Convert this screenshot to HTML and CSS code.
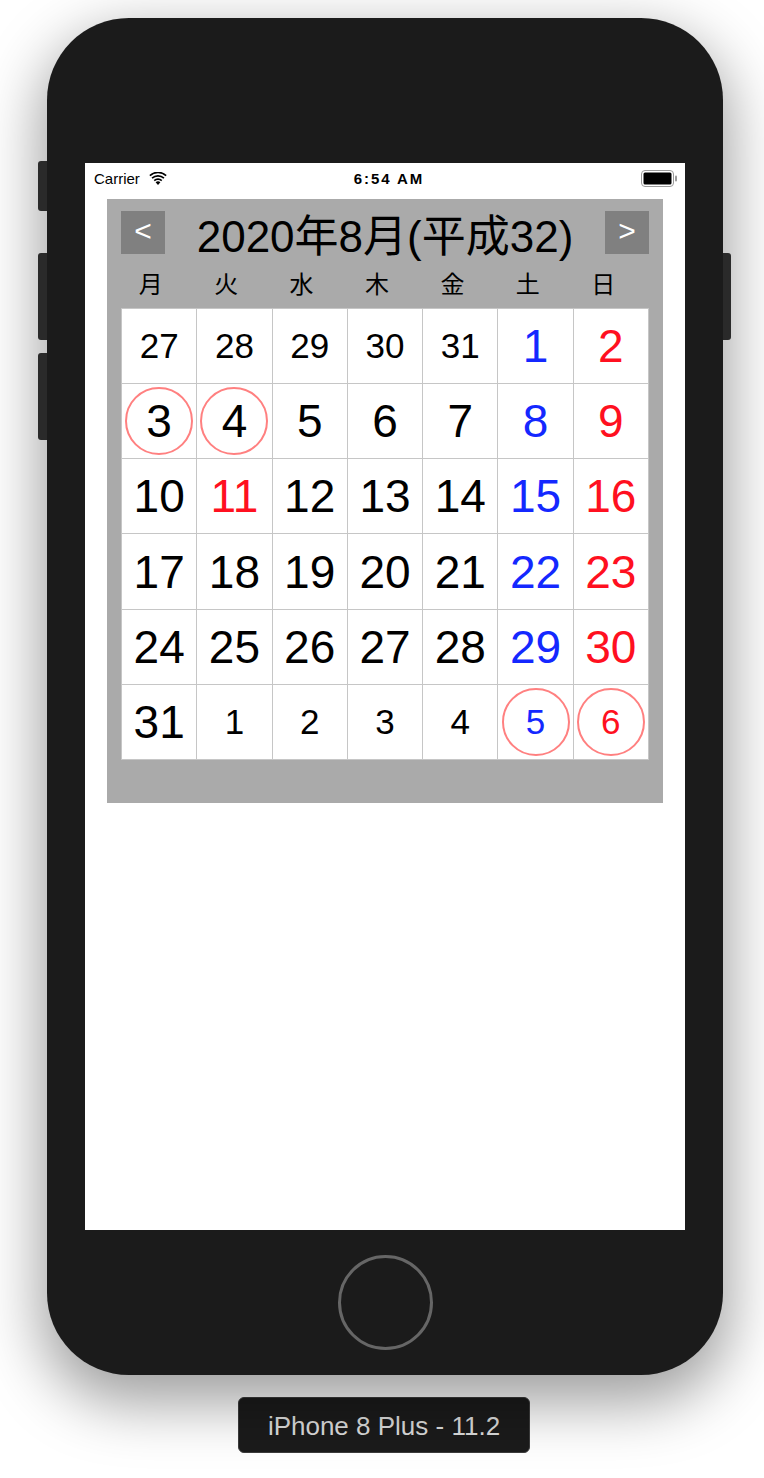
FILE: index.html
```html
<!DOCTYPE html>
<html lang="ja">
<head>
  <meta charset="UTF-8">
  <meta name="viewport" content="width=device-width, initial-scale=1.0">
  <title>カレンダー - iPhone 8 Plus</title>
  <link rel="stylesheet" href="styles.css">
</head>
<body>
  <div class="stage">
    <div class="phone">
      <span class="side-btn mute"></span>
      <span class="side-btn vol-up"></span>
      <span class="side-btn vol-down"></span>
      <span class="side-btn power"></span>

      <div class="screen">
        <div class="status-bar">
          <div class="carrier">
            Carrier
            <svg class="wifi" width="18" height="13" viewBox="0 0 18 13">
              <path d="M9 13 L6.6 10.2 A3.6 3.6 0 0 1 11.4 10.2 Z" fill="#000"/>
              <path d="M4.7 8 A6.4 6.4 0 0 1 13.3 8 L12.2 9.3 A4.6 4.6 0 0 0 5.8 9.3 Z" fill="#000"/>
              <path d="M2.5 5.5 A9.6 9.6 0 0 1 15.5 5.5 L14.4 6.8 A7.8 7.8 0 0 0 3.6 6.8 Z" fill="#000"/>
              <path d="M0.3 3 A12.8 12.8 0 0 1 17.7 3 L16.6 4.3 A11 11 0 0 0 1.4 4.3 Z" fill="#000"/>
            </svg>
          </div>
          <div class="clock">6:54 AM</div>
          <div class="battery">
            <svg width="37" height="17" viewBox="0 0 37 17">
              <rect x="0.5" y="0.5" width="32" height="16" rx="3.5" fill="none" stroke="#9a9a9a"/>
              <rect x="2.5" y="2.5" width="28" height="12" rx="1.5" fill="#000"/>
              <rect x="34" y="5.5" width="2" height="6" rx="1" fill="#9a9a9a"/>
            </svg>
          </div>
        </div>

        <div class="calendar">
          <div class="cal-head">
            <button class="nav">&lt;</button>
            <div class="cal-title">2020年8月(平成32)</div>
            <button class="nav">&gt;</button>
          </div>

          <div class="weekdays">
            <span>月</span><span>火</span><span>水</span><span>木</span><span>金</span><span>土</span><span>日</span>
          </div>

          <div class="days">
            <div class="day other">27</div>
            <div class="day other">28</div>
            <div class="day other">29</div>
            <div class="day other">30</div>
            <div class="day other">31</div>
            <div class="day sat">1</div>
            <div class="day sun">2</div>

            <div class="day mark">3</div>
            <div class="day mark">4</div>
            <div class="day">5</div>
            <div class="day">6</div>
            <div class="day">7</div>
            <div class="day sat">8</div>
            <div class="day sun">9</div>

            <div class="day">10</div>
            <div class="day sun">11</div>
            <div class="day">12</div>
            <div class="day">13</div>
            <div class="day">14</div>
            <div class="day sat">15</div>
            <div class="day sun">16</div>

            <div class="day">17</div>
            <div class="day">18</div>
            <div class="day">19</div>
            <div class="day">20</div>
            <div class="day">21</div>
            <div class="day sat">22</div>
            <div class="day sun">23</div>

            <div class="day">24</div>
            <div class="day">25</div>
            <div class="day">26</div>
            <div class="day">27</div>
            <div class="day">28</div>
            <div class="day sat">29</div>
            <div class="day sun">30</div>

            <div class="day">31</div>
            <div class="day other">1</div>
            <div class="day other">2</div>
            <div class="day other">3</div>
            <div class="day other">4</div>
            <div class="day other sat mark">5</div>
            <div class="day other sun mark">6</div>
          </div>
        </div>
      </div>

      <div class="home-btn"></div>
    </div>

    <div class="device-label">iPhone 8 Plus - 11.2</div>
  </div>
</body>
</html>
```

FILE: styles.css
```css
body {
  margin: 0;
  padding: 0;
  background-color: #fff;
  font-family: 'Liberation Sans', 'Noto Sans CJK JP', sans-serif;
}

.stage {
  width: 764px;
  height: 1478px;
  padding-top: 18px;
  box-sizing: border-box;
  overflow: hidden;
}

.phone {
  position: relative;
  width: 676px;
  height: 1357px;
  margin-left: 47px;
  padding-top: 145px;
  box-sizing: border-box;
  background-color: #1b1b1b;
  border-radius: 82px;
  box-shadow: 0 22px 60px 6px rgba(0, 0, 0, 0.38);
}

.side-btn {
  position: absolute;
  width: 9px;
  background-color: #2a2a2a;
  border-radius: 3px 0 0 3px;
}

.side-btn.mute { left: -9px; top: 143px; height: 50px; }
.side-btn.vol-up { left: -9px; top: 235px; height: 87px; }
.side-btn.vol-down { left: -9px; top: 335px; height: 87px; }
.side-btn.power { right: -8px; top: 235px; height: 87px; width: 8px; border-radius: 0 3px 3px 0; }

.screen {
  width: 600px;
  height: 1067px;
  margin-left: 38px;
  background-color: #fff;
  overflow: hidden;
}

.status-bar {
  height: 30px;
  display: flex;
  align-items: center;
  justify-content: space-between;
  padding: 0 7px 0 9px;
}

.carrier {
  display: flex;
  align-items: center;
  gap: 9px;
  width: 150px;
  font-size: 15px;
  color: #000;
}

.clock {
  margin-left: 6px;
  font-size: 15px;
  font-weight: bold;
  letter-spacing: 1.9px;
  color: #000;
}

.battery {
  width: 150px;
  height: 17px;
  display: flex;
  justify-content: flex-end;
}

.calendar {
  width: 556px;
  height: 604px;
  margin: 6px 0 0 22px;
  padding: 12px 14px;
  box-sizing: border-box;
  background-color: #aaa;
}

.cal-head {
  height: 43px;
  display: flex;
  align-items: center;
}

.nav {
  width: 44px;
  height: 43px;
  border: none;
  padding: 0 0 3px;
  background-color: #808080;
  color: #fff;
  font-family: 'Liberation Sans', sans-serif;
  font-size: 30px;
}

.cal-title {
  flex: 1;
  text-align: center;
  font-size: 44px;
  color: #000;
}

.weekdays {
  height: 54px;
  margin: 0 8px 0 -8px;
  display: grid;
  grid-template-columns: repeat(7, 1fr);
  align-items: center;
  padding-top: 2px;
  box-sizing: border-box;
  font-family: 'Noto Sans CJK JP', sans-serif;
  font-size: 24px;
  color: #000;
  text-align: center;
}

.days {
  height: 452px;
  display: grid;
  grid-template-columns: repeat(7, 1fr);
  grid-template-rows: repeat(6, 1fr);
  gap: 1px;
  padding: 1px;
  box-sizing: border-box;
  background-color: #c6c6c6;
}

.day {
  position: relative;
  display: flex;
  align-items: center;
  justify-content: center;
  background-color: #fff;
  font-size: 46px;
  color: #000;
}

.day.other {
  font-size: 35px;
}

.day.sat { color: #1428ff; }
.day.sun { color: #ff1020; }

.day.mark::after {
  content: "";
  position: absolute;
  top: 50%;
  left: 50%;
  width: 64px;
  height: 64px;
  margin: -34px 0 0 -34px;
  border: 2.5px solid #ff8080;
  border-radius: 50%;
}

.home-btn {
  width: 89px;
  height: 89px;
  margin: 25px auto 0;
  border: 3px solid #666;
  border-radius: 50%;
}

.device-label {
  width: 292px;
  height: 56px;
  margin: 22px 0 0 238px;
  box-sizing: border-box;
  display: flex;
  align-items: center;
  justify-content: center;
  padding-top: 2px;
  background-color: #1b1b1b;
  border: 1px solid #3c3c3c;
  border-radius: 6px;
  color: #dcdcdc;
  font-size: 26px;
}
```
